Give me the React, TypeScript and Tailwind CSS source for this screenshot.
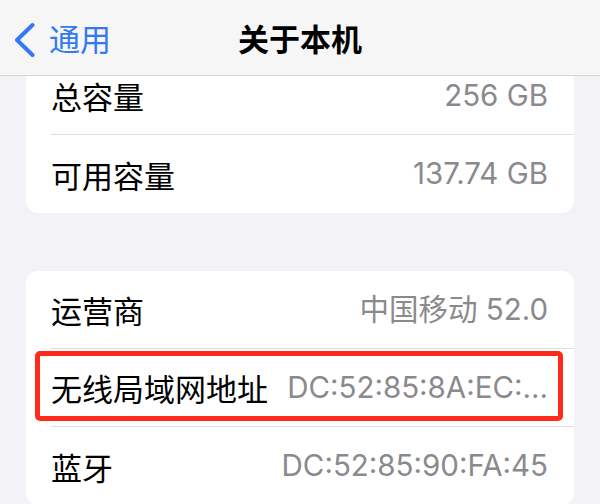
import React from "react";

const cjk = '"Noto Sans CJK SC", "Noto Sans", sans-serif';
const val = 'Inter, "Noto Sans CJK SC", sans-serif';

type Row = { label: string; value: string; highlight?: boolean };

function Card({ rows, className }: { rows: Row[]; className?: string }) {
  return (
    <div className={`mx-[26px] bg-white rounded-[12px] overflow-visible ${className ?? ""}`}>
      {rows.map((r, i) => (
        <div key={i} className="relative">
          <div
            className={`ml-[25px] pr-[26px] h-[78px] flex items-center justify-between ${
              i < rows.length - 1 ? "border-b border-[#dedee3]" : ""
            }`}
          >
            <span className="text-[31px] text-black leading-none" style={{ fontFamily: cjk }}>
              {r.label}
            </span>
            <span className="text-[29.5px] text-[#8a8a8e] leading-none" style={{ fontFamily: val }}>
              {r.value}
            </span>
          </div>
          {r.highlight && (
            <div className="absolute left-[9px] right-[11px] top-[2px] h-[70px] border-[5px] border-[#ff2a1a] rounded-[5px]" />
          )}
        </div>
      ))}
    </div>
  );
}

export default function App() {
  return (
    <div className="w-[600px] h-[504px] overflow-hidden bg-[#f2f2f7]">
      <div className="relative z-10 h-[76px] bg-[#f6f6f6] border-b border-[#d4d4d8] grid grid-cols-[1fr_auto_1fr] items-center">
        <div className="flex items-center pl-[13px]">
          <svg width="22" height="36" viewBox="0 0 22 36" className="mt-[4px]">
            <path d="M19.5 3 L4 18 L19.5 33" fill="none" stroke="#3478f6" strokeWidth="4" strokeLinecap="round" strokeLinejoin="round" />
          </svg>
          <span className="ml-[14px] text-[31px] text-[#3478f6] leading-none" style={{ fontFamily: cjk }}>
            通用
          </span>
        </div>
        <div className="text-[31px] font-semibold text-black leading-none" style={{ fontFamily: cjk }}>
          关于本机
        </div>
        <div />
      </div>
      <Card
        className="-mt-[19px]"
        rows={[
          { label: "总容量", value: "256 GB" },
          { label: "可用容量", value: "137.74 GB" },
        ]}
      />
      <Card
        className="mt-[58px]"
        rows={[
          { label: "运营商", value: "中国移动 52.0" },
          { label: "无线局域网地址", value: "DC:52:85:8A:EC:...", highlight: true },
          { label: "蓝牙", value: "DC:52:85:90:FA:45" },
        ]}
      />
    </div>
  );
}
